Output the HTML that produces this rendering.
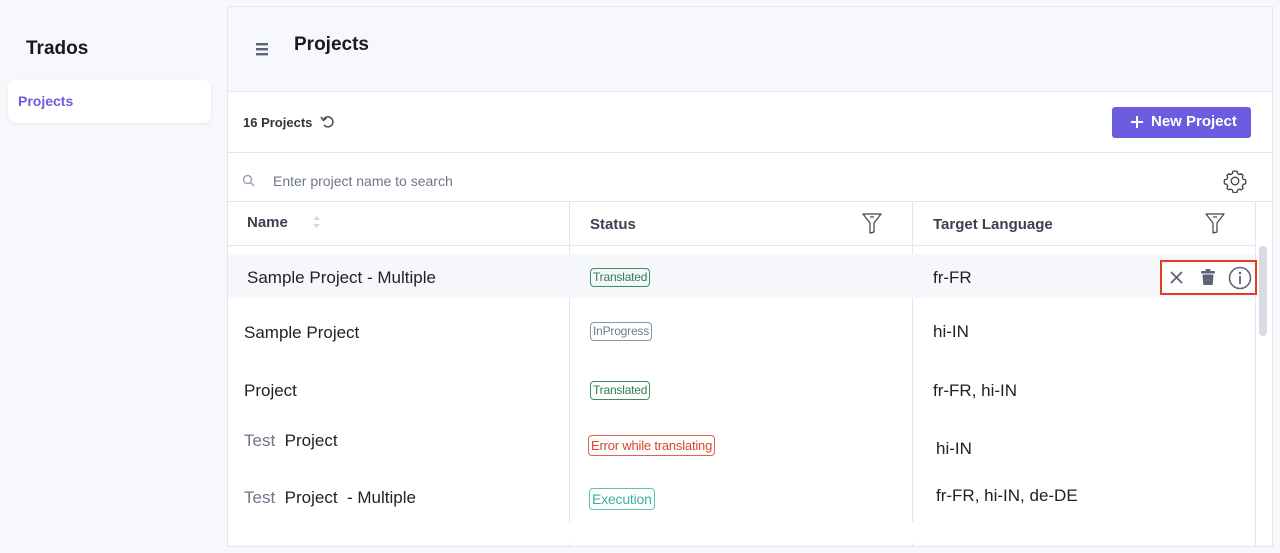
<!DOCTYPE html>
<html><head><meta charset="utf-8"><style>
*{box-sizing:border-box;margin:0;padding:0}
body{width:1280px;height:553px;background:#f7f8fc;font-family:"Liberation Sans",sans-serif;position:relative;overflow:hidden;color:#1f2328}
.a{position:absolute}
.t{position:absolute;white-space:nowrap}
.badge{position:absolute;border:1px solid;border-radius:4px;font-size:12px;padding:0 2px;height:19px;line-height:17px;white-space:nowrap;letter-spacing:-0.2px}
.cell{font-size:17px;color:#222}
</style></head><body>
<div class="t" style="left:26px;top:38px;font-size:19px;font-weight:bold;color:#1a1a1a">Trados</div>
<div class="a" style="left:8px;top:80px;width:203px;height:43px;background:#fff;border-radius:8px;box-shadow:0 1px 3px rgba(0,0,0,.08)"></div>
<div class="t" style="left:18px;top:93px;font-size:14px;font-weight:bold;color:#6b5ce0">Projects</div>

<div class="a" style="left:227px;top:6px;width:1046px;height:541px;border:1px solid #e3e6ee;background:#fff"></div>
<div class="a" style="left:228px;top:7px;width:1044px;height:85px;background:#f7f8fc;border-bottom:1px solid #e3e6ee"></div>
<svg class="a" style="left:256px;top:43px" width="13" height="13"><rect y="0" width="12" height="2.4" fill="#5b6478"/><rect y="5" width="12" height="2.4" fill="#5b6478"/><rect y="10" width="12" height="2.4" fill="#5b6478"/></svg>
<div class="t" style="left:294px;top:34px;font-size:19px;font-weight:bold;color:#1a1a1a">Projects</div>

<div class="t" style="left:243px;top:115px;font-size:13px;font-weight:bold;color:#333">16 Projects</div>
<svg class="a" style="left:320px;top:115px" width="15" height="14" viewBox="0 0 15 14"><path d="M3.5 4.5 A5 5 0 1 1 4 10" fill="none" stroke="#555" stroke-width="1.6"/><path d="M1 2 L3.5 5.5 L6.5 3" fill="none" stroke="#555" stroke-width="1.6"/></svg>
<div class="a" style="left:1112px;top:107px;width:139px;height:31px;background:#6b5ce0;border-radius:3px"></div>
<svg class="a" style="left:1130px;top:115px" width="14" height="14"><path d="M7 1V13M1 7H13" stroke="#fff" stroke-width="2"/></svg>
<div class="t" style="left:1151px;top:113px;font-size:15px;font-weight:bold;color:#fff">New Project</div>
<div class="a" style="left:228px;top:152px;width:1044px;height:1px;background:#e3e6ee"></div>

<svg class="a" style="left:242px;top:174px" width="13" height="13"><circle cx="5.5" cy="5.5" r="4" fill="none" stroke="#9aa2b4" stroke-width="1.4"/><path d="M8.5 8.5L12 12" stroke="#9aa2b4" stroke-width="1.4"/></svg>
<div class="t" style="left:273px;top:173px;font-size:14px;color:#6d7689">Enter project name to search</div>
<svg class="a" style="left:1223px;top:169px" width="24" height="24" viewBox="0 0 24 24"><path d="M12 2l2 .3.6 2.3 1.6.9 2.3-.7 1.5 1.5-.7 2.3.9 1.6 2.3.6.3 2-.3 2-2.3.6-.9 1.6.7 2.3-1.5 1.5-2.3-.7-1.6.9-.6 2.3-2 .3-2-.3-.6-2.3-1.6-.9-2.3.7-1.5-1.5.7-2.3-.9-1.6-2.3-.6-.3-2 .3-2 2.3-.6.9-1.6-.7-2.3 1.5-1.5 2.3.7 1.6-.9.6-2.3z" fill="none" stroke="#444" stroke-width="1.3"/><circle cx="12" cy="12" r="3.8" fill="none" stroke="#444" stroke-width="1.3"/></svg>
<div class="a" style="left:228px;top:201px;width:1044px;height:1px;background:#e3e6ee"></div>

<div class="t" style="left:247px;top:214px;font-size:15px;font-weight:bold;color:#3b4150">Name</div>
<svg class="a" style="left:312px;top:215px" width="9" height="14"><path d="M4.5 1L8 5H1z" fill="#d3d7e0"/><path d="M4.5 13L8 9H1z" fill="#d3d7e0"/></svg>
<div class="t" style="left:590px;top:216px;font-size:15px;font-weight:bold;color:#3b4150">Status</div>
<div class="t" style="left:933px;top:216px;font-size:15px;font-weight:bold;color:#3b4150">Target Language</div>
<svg class="a" style="left:862px;top:213px" width="20" height="21" viewBox="0 0 20 21"><path d="M1 1H19L12 10V19L8 20V10Z" fill="none" stroke="#444" stroke-width="1.2" stroke-linejoin="round"/><path d="M8 4h4" stroke="#444" stroke-width="1.2"/></svg>
<svg class="a" style="left:1205px;top:213px" width="20" height="21" viewBox="0 0 20 21"><path d="M1 1H19L12 10V19L8 20V10Z" fill="none" stroke="#444" stroke-width="1.2" stroke-linejoin="round"/><path d="M8 4h4" stroke="#444" stroke-width="1.2"/></svg>
<div class="a" style="left:228px;top:245px;width:1028px;height:1px;background:#e3e6ee"></div>
<div class="a" style="left:569px;top:202px;width:1px;height:320px;background:#e3e6ee"></div>
<div class="a" style="left:912px;top:202px;width:1px;height:320px;background:#e3e6ee"></div>
<div class="a" style="left:1255px;top:202px;width:1px;height:344px;background:#e3e6ee"></div>
<div class="a" style="left:1259px;top:246px;width:8px;height:90px;background:#d8dbe2;border-radius:4px"></div>
<div class="a" style="left:569px;top:543px;width:1px;height:4px;background:#e3e6ee"></div>
<div class="a" style="left:912px;top:543px;width:1px;height:4px;background:#e3e6ee"></div>

<div class="a" style="left:228px;top:254px;width:1027px;height:44px;background:#f6f7fb"></div>
<div class="t cell" style="left:247px;top:268px">Sample Project - Multiple</div>
<div class="badge" style="left:590px;top:268px;color:#2e7d4f;border-color:#3d8c5c">Translated</div>
<div class="t cell" style="left:933px;top:268px">fr-FR</div>
<div class="a" style="left:1160px;top:260px;width:97px;height:35px;border:2px solid #e23b22;background:#fff"></div>
<svg class="a" style="left:1169px;top:270px" width="15" height="15"><path d="M2 2L13 13M13 2L2 13" stroke="#5b6478" stroke-width="1.8"/></svg>
<svg class="a" style="left:1200px;top:268px" width="16" height="18" viewBox="0 0 16 18"><rect x="5.5" y="1" width="5" height="2" fill="#5b6478"/><rect x="1" y="3" width="14" height="2.5" rx="1" fill="#5b6478"/><path d="M2.5 6.5H13.5L12.7 17H3.3Z" fill="#5b6478"/></svg>
<svg class="a" style="left:1228px;top:266px" width="24" height="24"><circle cx="12" cy="12" r="10.5" fill="none" stroke="#5b6478" stroke-width="1.6"/><circle cx="12" cy="7" r="1.3" fill="#5b6478"/><path d="M12 10V18" stroke="#5b6478" stroke-width="1.8"/></svg>

<div class="t cell" style="left:244px;top:323px">Sample Project</div>
<div class="badge" style="left:590px;top:322px;color:#6d7a96;border-color:#8893ad">InProgress</div>
<div class="t cell" style="left:933px;top:322px">hi-IN</div>

<div class="t cell" style="left:244px;top:381px">Project</div>
<div class="badge" style="left:590px;top:381px;color:#2e7d4f;border-color:#3d8c5c">Translated</div>
<div class="t cell" style="left:933px;top:381px">fr-FR, hi-IN</div>

<div class="t cell" style="left:244px;top:431px"><span style="color:#6d7689">Test</span>&nbsp; Project</div>
<div class="badge" style="left:588px;top:435px;color:#d9442a;border-color:#e0644c;font-size:13px;height:21px;line-height:19px">Error while translating</div>
<div class="t cell" style="left:936px;top:439px">hi-IN</div>

<div class="t cell" style="left:244px;top:488px"><span style="color:#6d7689">Test</span>&nbsp; Project&nbsp; - Multiple</div>
<div class="badge" style="left:589px;top:488px;color:#3bb0a5;border-color:#5cc3b8;font-size:14px;height:22px;line-height:20px">Execution</div>
<div class="t cell" style="left:936px;top:486px">fr-FR, hi-IN, de-DE</div>
</body></html>
